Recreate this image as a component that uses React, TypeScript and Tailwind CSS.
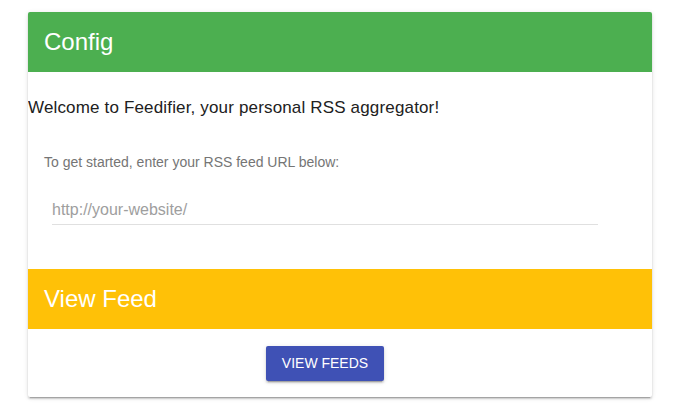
export default function App() {
  return (
    <div className="min-h-screen bg-white pt-3 font-['Liberation_Sans',Arial,sans-serif]">
      <div className="ml-[28px] w-[624px] overflow-hidden rounded-[2px] bg-white shadow-[0_2px_2px_0_rgba(0,0,0,0.14),0_3px_1px_-2px_rgba(0,0,0,0.2),0_1px_5px_0_rgba(0,0,0,0.12)]">
        <div className="flex h-[60px] items-center bg-[#4caf50] px-4">
          <h2 className="text-[24px] leading-none text-white">Config</h2>
        </div>

        <p className="mt-[24px] text-[17px] leading-6 tracking-[0.16px] text-[#212121]">
          Welcome to Feedifier, your personal RSS aggregator!
        </p>

        <p className="mt-[33px] px-4 text-[14px] leading-[18px] text-[#757575]">
          To get started, enter your RSS feed URL below:
        </p>

        <div className="mx-6 mt-[25px] w-[546px] pb-[44px]">
          <input
            type="text"
            placeholder="http://your-website/"
            className="block h-[29px] w-full border-b border-[#e0e0e0] bg-transparent text-[16px] text-[#424242] outline-none placeholder:text-[#9e9e9e]"
          />
        </div>

        <div className="flex h-[60px] items-center bg-[#ffc107] px-4">
          <h2 className="text-[24px] leading-none text-white">View Feed</h2>
        </div>

        <div className="flex justify-center pb-4 pt-[17px]">
          <button className="mr-[30px] h-[35px] rounded-[2px] bg-[#3f51b5] px-4 text-[14px] uppercase text-white shadow-[0_2px_2px_0_rgba(0,0,0,0.14),0_3px_1px_-2px_rgba(0,0,0,0.2),0_1px_5px_0_rgba(0,0,0,0.12)]">
            View Feeds
          </button>
        </div>
      </div>
    </div>
  );
}
